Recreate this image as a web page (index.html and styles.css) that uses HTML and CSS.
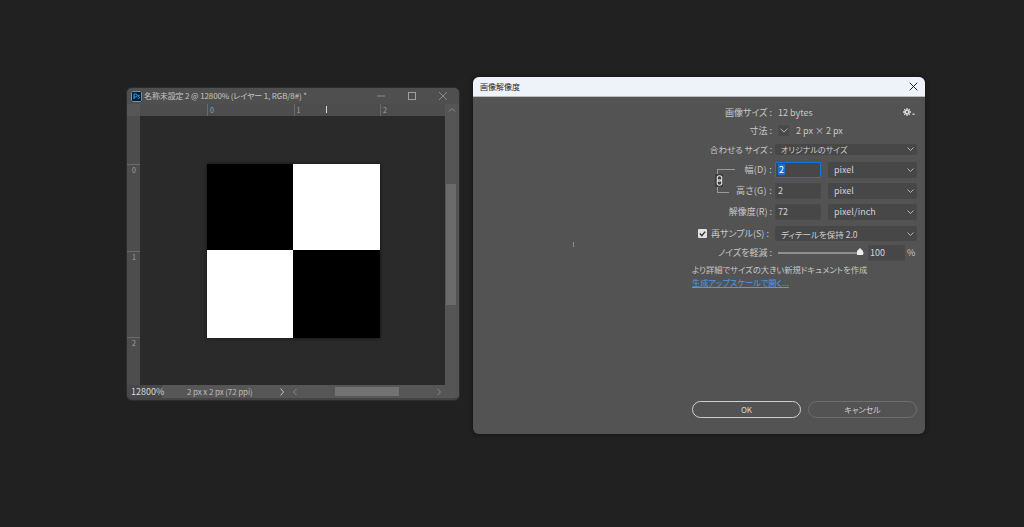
FILE: index.html
```html
<!DOCTYPE html>
<html lang="ja">
<head>
<meta charset="utf-8">
<title>画像解像度</title>
<link rel="stylesheet" href="styles.css">
</head>
<body>
<section class="doc">
  <header class="doc-title">
    <svg class="ps-logo" width="11" height="11" viewBox="0 0 11 11"><rect width="11" height="11" rx="1.5" fill="#001e36"/><rect x=".5" y=".5" width="10" height="10" rx="1.2" fill="none" stroke="#31a8ff"/><path d="M3 8V3h1.6a1.5 1.5 0 0 1 0 3H3M8.5 4.6c-1-.5-1.8-.2-1.6.4.2.6 1.7.6 1.6 1.6-.1.8-1 .9-1.9.5" fill="none" stroke="#31a8ff"/></svg>
    <span class="doc-name">名称未設定 2 @ 12800% (レイヤー 1, RGB/8#) *</span>
    <div class="win-buttons">
      <svg width="10" height="10" viewBox="0 0 10 10"><path d="M1 5h8" stroke="#8a8a8a"/></svg>
      <svg width="10" height="10" viewBox="0 0 10 10"><rect x="1.5" y="1.5" width="7" height="7" fill="none" stroke="#a0a0a0"/></svg>
      <svg width="10" height="10" viewBox="0 0 10 10"><path d="M1 1l8 8M9 1l-8 8" stroke="#8a8a8a"/></svg>
    </div>
  </header>
  <div class="doc-grid">
    <div class="ruler-corner"></div>
    <div class="ruler-top">
      <span class="tick-h">0</span><span class="tick-h">1</span><span class="tick-h">2</span>
      <i class="cursor-mark"></i>
    </div>
    <div class="scroll-cap"><svg width="8" height="6" viewBox="0 0 8 6"><path d="M1 4.5l3-3 3 3" fill="none" stroke="#8a8a8a"/></svg></div>
    <div class="ruler-left">
      <span class="tick-v">0</span><span class="tick-v">1</span><span class="tick-v">2</span>
    </div>
    <div class="canvas">
      <div class="checker">
        <div class="black"></div><div class="white"></div>
        <div class="white"></div><div class="black"></div>
      </div>
    </div>
    <div class="scroll-v">
      <div class="thumb-v"></div>
      <svg class="arrow-down" width="8" height="6" viewBox="0 0 8 6"><path d="M1 1.5l3 3 3-3" fill="none" stroke="#8a8a8a"/></svg>
    </div>
  </div>
  <footer class="doc-status">
    <span class="zoom-box">12800%</span>
    <span class="doc-size">2 px x 2 px (72 ppi)</span>
    <svg class="status-arrow" width="6" height="8" viewBox="0 0 6 8"><path d="M1.5 .5l3 3.5-3 3.5" fill="none" stroke="#c0c0c0"/></svg>
    <div class="scroll-h">
      <svg width="6" height="8" viewBox="0 0 6 8"><path d="M4.5 1l-3 3 3 3" fill="none" stroke="#8a8a8a"/></svg>
      <div class="thumb-h"></div>
      <svg width="6" height="8" viewBox="0 0 6 8"><path d="M1.5 1l3 3-3 3" fill="none" stroke="#8a8a8a"/></svg>
    </div>
    <div class="status-end"></div>
  </footer>
</section>

<section class="dialog">
  <header class="dlg-title">
    <span>画像解像度</span>
    <svg width="9" height="9" viewBox="0 0 9 9"><path d="M.7 .7l7.6 7.6M8.3 .7L.7 8.3" stroke="#222" stroke-width="1"/></svg>
  </header>
  <div class="dlg-body">
    <i class="busy-dot"></i>
    <div class="form">
      <div class="row row-info">
        <label class="lbl">画像サイズ :</label>
        <span class="value value-bytes">12 bytes</span>
        <svg class="gear" width="12" height="8" viewBox="0 0 12 8"><path d="M4 0v8M0 4h8M1.2 1.2l5.6 5.6M6.8 1.2L1.2 6.8" stroke="#d8d8d8" stroke-width="1.3"/><circle cx="4" cy="4" r="2.5" fill="#d8d8d8"/><circle cx="4" cy="4" r="1" fill="#535353"/><rect x="9.5" y="5.5" width="2" height="1.4" fill="#d8d8d8"/></svg>
      </div>
      <div class="row row-dims">
        <label class="lbl">寸法 :</label>
        <span class="chev-box"><svg width="8" height="5" viewBox="0 0 8 5"><path d="M.5 .8L4 4 7.5 .8" fill="none" stroke="#b5b5b5"/></svg></span>
        <span class="value">2 px × 2 px</span>
      </div>
      <div class="row row-fit">
        <label class="lbl lbl-fit">合わせる サイズ :</label>
        <div class="select select-wide select-fit"><span>オリジナルのサイズ</span><svg width="7" height="4" viewBox="0 0 7 4"><path d="M.5 .5l3 3 3-3" fill="none" stroke="#b5b5b5"/></svg></div>
      </div>
      <div class="link-group">
        <div class="bracket bracket-top"></div>
        <div class="chain"><svg width="7" height="11" viewBox="0 0 7 11"><rect x="1.2" y=".8" width="4.6" height="5.4" rx="2.2" fill="none" stroke="#e4e4e4" stroke-width="1.1"/><rect x="1.2" y="4.8" width="4.6" height="5.4" rx="2.2" fill="none" stroke="#e4e4e4" stroke-width="1.1"/></svg></div>
        <div class="bracket bracket-bottom"></div>
        <div class="row row-field">
          <label class="lbl lbl-spaced">幅(D) :</label>
          <div class="input input-focus"><span class="selected">2</span></div>
          <div class="select select-unit"><span>pixel</span><svg width="7" height="4" viewBox="0 0 7 4"><path d="M.5 .5l3 3 3-3" fill="none" stroke="#b5b5b5"/></svg></div>
        </div>
        <div class="row row-field">
          <label class="lbl lbl-spaced">高さ(G) :</label>
          <div class="input"><span>2</span></div>
          <div class="select select-unit"><span>pixel</span><svg width="7" height="4" viewBox="0 0 7 4"><path d="M.5 .5l3 3 3-3" fill="none" stroke="#b5b5b5"/></svg></div>
        </div>
      </div>
      <div class="row row-field">
        <label class="lbl">解像度(R) :</label>
        <div class="input"><span>72</span></div>
        <div class="select select-unit"><span>pixel/inch</span><svg width="7" height="4" viewBox="0 0 7 4"><path d="M.5 .5l3 3 3-3" fill="none" stroke="#b5b5b5"/></svg></div>
      </div>
      <div class="row row-field row-resample">
        <label class="lbl lbl-check"><svg class="check" width="9" height="9" viewBox="0 0 9 9"><rect width="9" height="9" rx="1" fill="#e2e2e2"/><path d="M1.8 4.6l2 2 3.4-4" fill="none" stroke="#333" stroke-width="1.4"/></svg><span class="check-text">再サンプル(S) :</span></label>
        <div class="select select-wide select-resample"><span>ディテールを保持 2.0</span><svg width="7" height="4" viewBox="0 0 7 4"><path d="M.5 .5l3 3 3-3" fill="none" stroke="#b5b5b5"/></svg></div>
      </div>
      <div class="row row-noise">
        <label class="lbl">ノイズを軽減 :</label>
        <div class="slider"><svg class="slider-thumb" width="8" height="7" viewBox="0 0 8 7"><path d="M4 0l3 3v4H1V3z" fill="#ececec"/></svg></div>
        <div class="input input-noise"><span>100</span></div>
        <span class="percent">%</span>
      </div>
      <p class="hint">より詳細でサイズの大きい新規ドキュメントを作成</p>
      <a class="link">生成アップスケールで開く...</a>
      <div class="buttons">
        <div class="btn btn-ok">OK</div>
        <div class="btn btn-cancel">キャンセル</div>
      </div>
    </div>
  </div>
</section>
</body>
</html>
```
FILE: styles.css
```css
* { box-sizing: border-box; }
html, body { margin: 0; height: 100%; }
body {
  background: #212121;
  font-family: "Noto Sans CJK JP", "Noto Sans", sans-serif;
  font-feature-settings: "palt";
  font-size: 9px;
  color: #cfcfcf;
  overflow: hidden;
  position: relative;
}
svg { display: block; flex: none; }

/* Document window */
.doc {
  position: absolute;
  left: 127px; top: 88px;
  width: 332px; height: 312px;
  background: #505050;
  border-radius: 5px;
  border-bottom: 2px solid #444;
  box-shadow: 0 0 0 1px #2c2c2c;
  display: flex;
  flex-direction: column;
  overflow: hidden;
}
.doc-title {
  height: 16px;
  padding-left: 4px;
  display: flex;
  align-items: center;
  background: #4f4f4f;
  flex: none;
}
.doc-name { margin-left: 1px; padding-left: 1px; font-size: 8px; letter-spacing: -.12px; line-height: 16px; color: #c4c4c4; white-space: nowrap; }
.win-buttons { margin-left: auto; display: flex; gap: 21px; padding-right: 11px; }
.ps-logo { margin-top: 1px; }
.doc-grid {
  flex: 1;
  display: grid;
  grid-template-columns: 13px 305px 14px;
  grid-template-rows: 12px 1fr;
  min-height: 0;
}
.ruler-corner { background: #565656; }
.ruler-top {
  background: #4d4d4d;
  display: flex;
  padding-left: 67px;
  position: relative;
  color: #a0a0a0;
  font-size: 7px;
  overflow: hidden;
}
.tick-h { flex: none; width: 86.5px; padding-left: 2px; border-left: 1px solid #6a6a6a; line-height: 12px; height: 12px; }
.cursor-mark { position: absolute; left: 186px; top: 2px; width: 1px; height: 7px; background: #d8d8d8; }
.scroll-cap { background: #555; display: flex; align-items: center; justify-content: center; }
.ruler-left {
  background: #4d4d4d;
  padding-top: 48px;
  color: #a0a0a0;
  font-size: 7px;
}
.tick-v { display: block; height: 86.5px; padding-left: 5px; border-top: 1px solid #6a6a6a; line-height: 11px; }
.canvas { background: #2a2a2a; padding: 48px 0 0 67px; }
.checker {
  width: 173px; height: 174px;
  display: grid;
  grid-template-columns: 86px 87px;
  grid-template-rows: 86px 88px;
  box-shadow: 0 0 3px #111;
}
.black { background: #000; }
.white { background: #fff; }
.scroll-v { background: #555; padding: 68px 3px 0 1px; position: relative; }
.thumb-v { height: 121px; background: #6b6b6b; }
.arrow-down { position: absolute; left: 3px; bottom: 3px; }
.doc-status {
  height: 13px;
  flex: none;
  display: flex;
  align-items: center;
  background: #565656;
}
.zoom-box { width: 35px; padding-left: 4px; font-size: 9px; color: #d4d4d4; background: #484848; line-height: 13px; }
.doc-size { margin-left: 25px; width: 92px; color: #bcbcbc; font-size: 8px; letter-spacing: -.1px; white-space: nowrap; }
.status-arrow { margin-left: 1px; }
.scroll-h {
  margin-left: 3px;
  width: 159px;
  height: 13px;
  display: flex;
  align-items: center;
  padding-left: 4px;
  background: #565656;
}
.thumb-h { margin-left: 37px; width: 64px; height: 9px; background: #727272; }
.scroll-h svg:last-child { margin-left: 37px; }
.status-end { width: 14px; height: 13px; background: #5a5a5a; margin-left: auto; }

/* Dialog */
.dialog {
  position: absolute;
  left: 473px; top: 77px;
  width: 452px; height: 357px;
  border-radius: 6px;
  overflow: hidden;
  background: #535353;
  display: flex;
  flex-direction: column;
  box-shadow: 0 0 4px #111;
}
.dlg-title {
  height: 20px;
  flex: none;
  background: #eef3f9;
  border-bottom: 1px solid #bcbcbc;
  color: #2a2a2a;
  display: flex;
  align-items: center;
  justify-content: space-between;
  padding: 0 7px 0 7px;
  font-size: 8px;
}
.dlg-body { flex: 1; position: relative; padding: 7px 8px 0 219px; }
.busy-dot { position: absolute; left: 100px; top: 145px; width: 1px; height: 5px; background: #8d8d8d; }
.form { display: flex; flex-direction: column; height: 100%; }
.row { display: flex; align-items: center; flex: none; }
.lbl {
  width: 80px;
  margin-right: 3px;
  text-align: right;
  white-space: nowrap;
  color: #c8c8c8;
  font-size: 9px;
  flex: none;
}
.lbl-fit { font-size: 8.5px; }
.lbl-spaced { letter-spacing: .3px; }
.row-info { height: 16px; }
.row-dims { height: 21px; }
.row-fit { height: 16px; }
.value { color: #c8c8c8; font-size: 9px; }
.value-bytes { margin-left: 3px; }
.gear { margin-left: auto; margin-right: 2px; }
.chev-box {
  width: 11px; height: 11px;
  margin-left: 3px; margin-right: 7px;
  background: #484848;
  display: flex; align-items: center; justify-content: center;
  border: 1px solid #4c4c4c;
  border-radius: 1px;
}
.select {
  background: #474747;
  border-radius: 2px;
  display: flex;
  align-items: center;
  justify-content: space-between;
  padding: 0 3px 0 6px;
  color: #cfcfcf;
  font-size: 9px;
  flex: none;
}
.select-wide { width: 142px; height: 15px; }
.select-fit { height: 11px; font-size: 8px; }
.select-resample { font-size: 8.5px; }
.select-unit { width: 89px; height: 16px; margin-left: 7px; }
.row-field { height: 21px; }
.row-resample { margin-top: 1px; }
.input {
  width: 46px; height: 16px;
  background: #474747;
  border: 1px solid #4a4a4a;
  border-radius: 1px;
  padding-left: 2px;
  display: flex;
  align-items: center;
  color: #d4d4d4;
  font-size: 9px;
}
.input-focus { border-color: #1473e6; }
.selected { background: #1a6fd6; color: #fff; padding: 0 1px; line-height: 11px; }
.link-group { position: relative; margin-top: 2px; }
.bracket { position: absolute; left: 25px; border-left: 1px solid #9a9a9a; }
.bracket-top { top: 10px; height: 5px; border-top: 1px solid #9a9a9a; width: 18px; }
.bracket-bottom { top: 28px; height: 6px; border-bottom: 1px solid #9a9a9a; width: 12px; }
.chain {
  position: absolute; left: 23px; top: 15px;
  width: 8px; height: 13px;
  background: #3d3d3d;
  display: flex; align-items: center; justify-content: center;
}
.lbl-check { display: flex; align-items: center; padding-left: 6px; justify-content: flex-start; }
.check-text { margin-left: 4px; }
.row-noise { height: 17px; }
.slider {
  width: 86px; height: 2px;
  margin-left: 3px;
  background: #8f8f8f;
  position: relative;
}
.slider-thumb { position: absolute; right: 0; top: -4px; }
.input-noise { width: 37px; margin-left: 4px; padding-left: 1px; }
.percent { margin-left: 2px; font-size: 9px; color: #c8c8c8; }
.hint { margin: 1px 0 0; font-size: 8.3px; line-height: 14px; color: #c8c8c8; white-space: nowrap; }
.link { font-size: 8.2px; line-height: 12px; color: #4e9be6; text-decoration: underline; width: max-content; }
.buttons { margin-top: 113px; display: flex; gap: 7px; }
.btn {
  width: 109px; height: 17px;
  border-radius: 9px;
  display: flex; align-items: center; justify-content: center;
  font-size: 8px;
}
.btn-ok { border: 1px solid #d0d0d0; color: #d8d8d8; }
.btn-cancel { border: 1px solid #6e6e6e; color: #cfcfcf; }
```
